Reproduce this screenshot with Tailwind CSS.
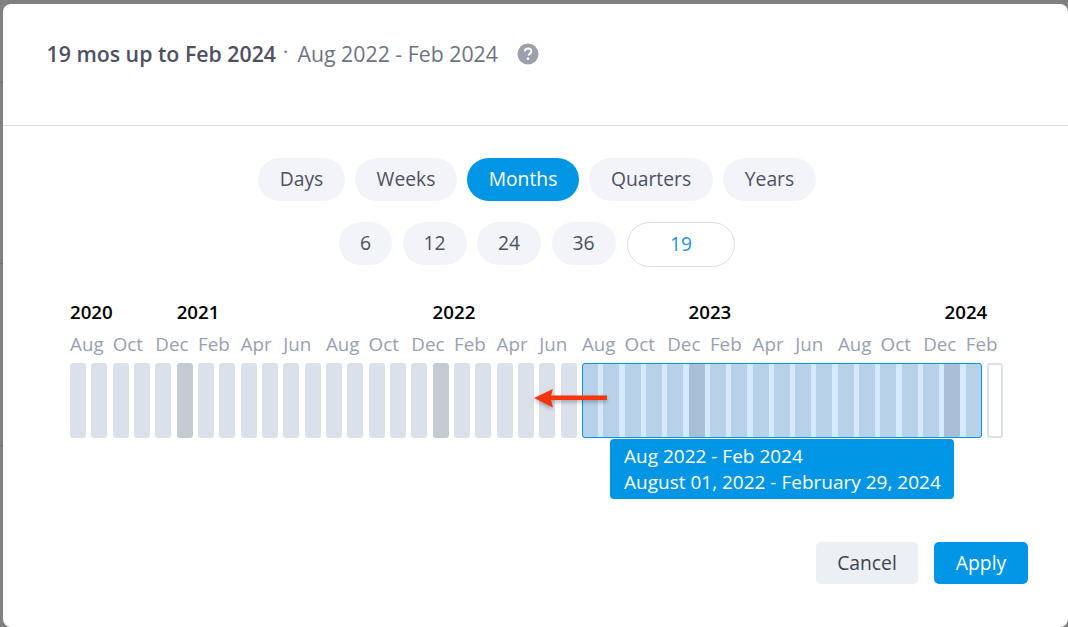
<!DOCTYPE html>
<html lang="en">
<head>
  <meta charset="UTF-8" />
  <title>Date range</title>
  <script src="https://cdn.jsdelivr.net/npm/@tailwindcss/browser@4"></script>
</head>
<body class="relative bg-[#808080] font-['Open_Sans',sans-serif] h-[627px] w-[1068px] overflow-hidden pl-[3px] pt-[4px]">
  <div class="absolute left-0 top-[82px] w-[3px] h-px bg-[#707070]"></div>
  <div class="absolute left-0 top-[263px] w-[3px] h-px bg-[#707070]"></div>
  <div class="absolute left-0 top-[445px] w-[3px] h-px bg-[#707070]"></div>

  <div class="bg-white rounded-[8px] h-[623px] w-[1065px]">
    <div class="h-[122px] border-b border-[#d9dfe6] pl-[43.5px] pt-[33px] flex items-start">
      <h1 class="text-[21.3px] leading-[34px] font-semibold text-[#4f5162] whitespace-nowrap">19 mos up to Feb 2024</h1>
      <span class="text-[20px] leading-[30px] text-[#6f7385] ml-[7px] w-[14.5px]">·</span>
      <span class="text-[21.3px] leading-[34px] text-[#6f7385] whitespace-nowrap">Aug 2022 - Feb 2024</span>
      <svg class="ml-[19px] mt-[6px]" width="22" height="22" viewBox="0 0 22 22">
        <circle cx="11" cy="11" r="10.5" fill="#9ca1ac" />
        <path d="M7.8 8.6c0-1.900 1.400-3 3.300-3s3.200 1.100 3.200 2.700c0 1.200-.6 1.900-1.600 2.500-.8.5-1.100.9-1.100 1.700" fill="none" stroke="#fff" stroke-width="2" />
        <circle cx="11" cy="15.800" r="1.300" fill="#fff" />
      </svg>
    </div>

    <div class="flex justify-center gap-[10px] mt-[32px] pl-[3px] text-[19.3px] font-medium text-[#4f5162]">
      <button class="h-[43px] w-[87px] rounded-full bg-[#f3f4f9]">Days</button>
      <button class="h-[43px] w-[102px] rounded-full bg-[#f3f4f9]">Weeks</button>
      <button class="h-[43px] w-[112px] rounded-full bg-[#0095e5] text-white">Months</button>
      <button class="h-[43px] w-[124px] rounded-full bg-[#f3f4f9]">Quarters</button>
      <button class="h-[43px] w-[93px] rounded-full bg-[#f3f4f9]">Years</button>
    </div>

    <div class="flex justify-center items-start gap-[10.5px] mt-[21px] pl-[3px] text-[19.3px] font-medium text-[#4f5162]">
      <button class="h-[43px] w-[53px] rounded-full bg-[#f3f4f9]">6</button>
      <button class="h-[43px] w-[64px] rounded-full bg-[#f3f4f9]">12</button>
      <button class="h-[43px] w-[64px] rounded-full bg-[#f3f4f9]">24</button>
      <button class="h-[43px] w-[64px] rounded-full bg-[#f3f4f9]">36</button>
      <button class="h-[45px] w-[108px] ml-[1px] rounded-full border border-[#d9dfe6] text-[#1f93e3]">19</button>
    </div>

    <div id="timeline" class="relative ml-[67px] mt-[32px] w-[940px]">
      <div id="years" class="relative h-[26px] text-[18.7px] leading-[26px] font-semibold text-black"></div>
      <div id="months" class="relative h-[36px] text-[18.8px] leading-[38px] font-medium text-[#9a9fb0]"></div>
      <div id="bars" class="flex gap-x-[5.33px] mt-[2px] h-[75px]"></div>

      <div class="absolute left-[512px] top-[64px] w-[400px] h-[75px] rounded-[3px] border border-[#0095e5] bg-[#2a8fe8]/20"></div>

      <div class="absolute left-[540px] top-[140px] w-[344px] h-[60px] rounded-[4px] bg-[#0095e5] pl-[14px] pt-[4px] text-[19px] leading-[26px] font-medium text-white whitespace-nowrap">
        <div>Aug 2022 - Feb 2024</div>
        <div>August 01, 2022 - February 29, 2024</div>
      </div>

      <svg class="absolute left-[460px] top-[86px] overflow-visible drop-shadow-[0_2px_2px_rgba(0,0,0,0.3)]" width="82" height="26" viewBox="0 0 82 26">
        <path d="M4 13 L23 4 L21 10.500 L77 10.500 L77 15 L21 15 L23 22.500 Z" fill="#f8340f" />
      </svg>
    </div>

    <div class="flex justify-end gap-[16px] mt-[104px] pr-[40px] text-[19.3px] font-medium">
      <button class="h-[42px] w-[102px] rounded-[5px] bg-[#eceff4] text-[#3c4552]">Cancel</button>
      <button class="h-[42px] w-[94px] rounded-[5px] bg-[#0095e5] text-white">Apply</button>
    </div>
  </div>

  <script>
    const pitch = 21.33;
    const years = { 0: 2020, 5: 2021, 17: 2022, 29: 2023, 41: 2024 };
    const names = ["Aug", "Oct", "Dec", "Feb", "Apr", "Jun"];

    const yearRow = document.getElementById("years");
    for (const i in years) {
      const el = document.createElement("span");
      el.className = "absolute whitespace-nowrap";
      el.style.left = i * pitch + "px";
      el.textContent = years[i];
      yearRow.appendChild(el);
    }

    const monthRow = document.getElementById("months");
    for (let i = 0; i <= 42; i += 2) {
      const el = document.createElement("span");
      el.className = "absolute whitespace-nowrap";
      el.style.left = i * pitch + "px";
      el.textContent = names[(i / 2) % 6];
      monthRow.appendChild(el);
    }

    const barRow = document.getElementById("bars");
    for (let i = 0; i < 44; i++) {
      const el = document.createElement("div");
      let cls = "w-[16px] shrink-0 rounded-[3px] ";
      if (i === 43) cls += "border-2 border-[#dbe1ea] bg-white";
      else if (i % 12 === 5) cls += "bg-[#c6cad3]";
      else cls += "bg-[#dbe1ea]";
      el.className = cls;
      barRow.appendChild(el);
    }
  </script>
</body>
</html>
